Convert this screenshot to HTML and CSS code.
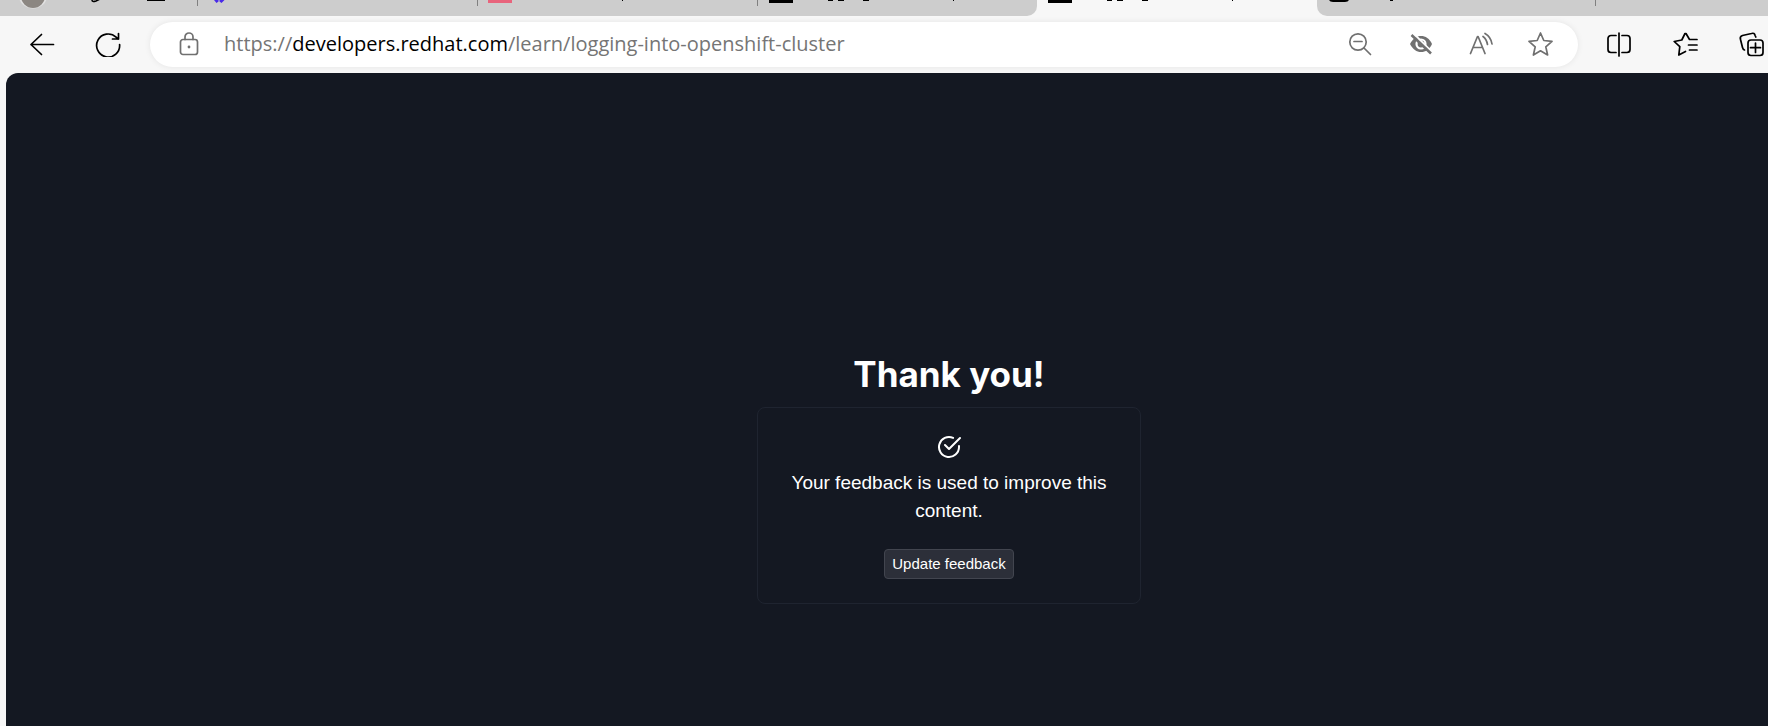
FILE: index.html
```html
<!DOCTYPE html>
<html lang="en">
<head>
<meta charset="utf-8">
<meta name="viewport" content="width=device-width, initial-scale=1">
<title>Thank you!</title>
<link rel="stylesheet" href="styles.css">
</head>
<body>
<header class="browser">
  <div class="tabs">
    <div class="tab-tools">
      <svg width="198" height="16" viewBox="0 0 198 16"><ellipse cx="33" cy="-4" rx="14" ry="12.5" fill="#e2e2e2"/><ellipse cx="33" cy="-4" rx="12" ry="12" fill="#8c8782"/><path d="M92 0c0 2 2 1.600 4 1l4-2" fill="none" stroke="#000" stroke-width="1.600"/><path d="M147 0h18" stroke="#000" stroke-width="2"/></svg>
    </div>
    <div class="tab divided"><svg width="200" height="16" viewBox="0 0 200 16"><path d="M17 0l2.500 3 2-1.500V0zM22.500 0v1.500l2 1.500 3-3z" fill="#4a2be8"/></svg></div>
    <div class="tab divided"><svg width="200" height="16" viewBox="0 0 200 16"><path d="M11 0h24v3H11z" fill="#e8647c"/><path d="M145 0h1v1h-1z"/></svg></div>
    <div class="tab divided before-active"><svg width="240" height="16" viewBox="0 0 240 16"><path d="M12 0h24v3H12zM71 0h5v1h-5zM81 0h6v1h-6zM106 0h6v1h-6zM196 0h1v1h-1z"/></svg></div>
    <div class="tab active"><svg width="240" height="16" viewBox="0 0 240 16"><path d="M11 0h24v3H11zM70 0h5v1h-5zM80 0h6v1h-6zM105 0h6v1h-6zM195 0h1v1h-1z"/></svg></div>
    <div class="tab after-active"><svg width="200" height="16" viewBox="0 0 200 16"><path d="M12 0h20q-1 2-4 2h-12q-3 0-4-2zM73 0h3v1h-3z"/></svg></div>
    <div class="tab divided last"></div>
  </div>
  <div class="toolbar">
    <div class="nav">
      <button class="icon-button" aria-label="Back"><svg width="26" height="26" viewBox="0 0 26 26" class="line"><path d="M24.500 13.500H2M12.500 3.500L2 13.500l10.500 10"/></svg></button>
      <button class="icon-button" aria-label="Refresh"><svg width="26" height="26" viewBox="0 0 26 26" class="line"><path d="M24.600 13.500a11.500 11.500 0 1 1-3.500-7.300l2 2M23.500 2.500v5.500h-6"/></svg></button>
    </div>
    <div class="address">
      <button class="icon-button small" aria-label="Site information"><svg width="22" height="26" viewBox="0 0 22 26" class="line"><rect x="2.500" y="8.500" width="17" height="15" rx="2.500"/><path d="M7 8.500V6a4 4 0 0 1 8 0v2.500"/><circle cx="11" cy="16" r="1.400" fill="currentColor" stroke="none"/></svg></button>
      <div class="url" role="textbox" aria-label="Address" tabindex="0">https://<span class="host">developers.redhat.com</span>/learn/logging-into-openshift-cluster</div>
      <div class="address-actions">
        <button class="icon-button small" aria-label="Zoom out"><svg width="26" height="26" viewBox="0 0 26 26" class="line"><circle cx="10" cy="11" r="8.200"/><path d="M16 17l6.500 6.500M6 10.500h8"/></svg></button>
        <button class="icon-button small" aria-label="Tracking prevention"><svg width="26" height="26" viewBox="0 0 26 26"><path d="M2 13C5 7.500 8.500 5 13 5s8.500 2.500 11 8c-2.500 5.500-6.500 8-11 8S5 18.500 2 13z" fill="currentColor"/><circle cx="13" cy="13" r="4.500" fill="none" stroke="#fff" stroke-width="2.200"/><path d="M5.500 2.500l19 19" stroke="#fff" stroke-width="2"/><path d="M3.500 4L23 22.500" stroke="currentColor" stroke-width="2.600"/></svg></button>
        <button class="icon-button small" aria-label="Read aloud"><svg width="26" height="26" viewBox="0 0 26 26" class="line"><path d="M2.500 22.500L9.500 5.500h.6L17 22.500M5 16.500h9.500M15 5.500q3.500 2.500 4.500 8M17 2.500q6 3.500 7 10.500"/></svg></button>
        <button class="icon-button small" aria-label="Add to favorites"><svg width="26" height="26" viewBox="0 0 26 26" class="line"><path d="M12.500 2l3.300 7.500 8.200.8-6.200 5.500 1.800 8.200-7.100-4.200L5.400 24l1.800-8.200L1 10.300l8.200-.8z"/></svg></button>
      </div>
    </div>
    <div class="browser-actions">
      <button class="icon-button" aria-label="Split screen"><svg width="26" height="26" viewBox="0 0 26 26" class="line"><path d="M10 4.500H5a3 3 0 0 0-3 3v11a3 3 0 0 0 3 3h5M16 4.500h5a3 3 0 0 1 3 3v11a3 3 0 0 1-3 3h-5M13 2v23"/></svg></button>
      <button class="icon-button" aria-label="Favorites"><svg width="26" height="26" viewBox="0 0 26 26" class="line"><path d="M25 8.500h-7.500L14 2.500h-1L9.800 9l-7.600 1.500 5.600 5.200-1 8.300 6.700-3.500M16.500 14H25M17.500 19H25"/></svg></button>
      <button class="icon-button" aria-label="Collections"><svg width="26" height="26" viewBox="0 0 26 26" class="line"><rect x="10" y="9" width="15" height="15.500" rx="3"/><path d="M17.500 12v9.500M12.500 16.700h10M6.500 19q-1.500-.5-2-2.500L2.500 8.500q-1-3 2-4l9-2q3-1 3.600 2l.7 1.500"/></svg></button>
    </div>
  </div>
</header>
<main class="page">
  <section class="thanks">
    <h1 class="title">Thank you!</h1>
    <div class="card">
      <svg class="check" width="24" height="24" viewBox="0 0 24 24" fill="none" stroke="currentColor" stroke-width="2" stroke-linecap="round" stroke-linejoin="round"><path d="M22 11.080V12a10 10 0 1 1-5.930-9.140"/><path d="M23 3L12 14.010l-4-4"/></svg>
      <p class="message">Your feedback is used to improve this content.</p>
      <button class="update">Update feedback</button>
    </div>
  </section>
</main>
</body>
</html>
```
FILE: styles.css
```css
* { box-sizing: border-box; }
body {
  margin: 0;
  min-height: 100vh;
  display: flex;
  flex-direction: column;
  background: #f7f7f7;
  overflow: hidden;
}
svg { display: block; flex: none; }
button { font: inherit; cursor: pointer; }
.tabs { display: flex; height: 16px; background: #f7f7f7; overflow: hidden; }
.tab-tools { flex: none; width: 197px; background: #cdcdcd; }
.tab { flex: none; width: 280px; background: #cdcdcd; overflow: hidden; }
.divided {
  background: linear-gradient(#808080, #808080) 0 0 / 1px 6px no-repeat #cdcdcd;
}
.before-active { border-bottom-right-radius: 10px; }
.active { background: #f7f7f7; }
.after-active { width: 278px; border-bottom-left-radius: 10px; }
.last { flex: 1; }
.toolbar {
  display: flex;
  align-items: center;
  height: 57px;
  background: #f7f7f7;
  padding-bottom: 1px;
}
.nav { display: flex; gap: 40px; padding: 0 29px; }
.icon-button {
  display: flex;
  padding: 0;
  border: 0;
  background: none;
  color: #000;
}
.small { color: #707070; }
.line { fill: none; stroke: currentColor; stroke-width: 1.7; stroke-linecap: round; stroke-linejoin: round; }
.address {
  flex: 1;
  display: flex;
  align-items: center;
  gap: 24px;
  height: 45px;
  padding: 0 24px 0 28px;
  border-radius: 24px;
  background: #fff;
  box-shadow: 0 0 6px rgba(0, 0, 0, 0.08);
}
.url {
  flex: 1;
  font: 20px/28px "Open Sans", "Noto Sans", sans-serif;
  color: #757575;
  white-space: nowrap;
}
.host { color: #000; }
.address-actions { display: flex; gap: 34px; }
.browser-actions { display: flex; gap: 40px; padding: 0 4px 0 28px; }
.page {
  flex: 1;
  margin-left: 6px;
  padding: 277px 0 24px 124px;
  border-top-left-radius: 12px;
  background: #141822;
  color: #fff;
  font-family: "Liberation Sans", sans-serif;
}
.thanks { width: 384px; margin: 0 auto; text-align: center; }
.title { margin: 0 0 9px; font: 700 35px/48px Inter, "Liberation Sans", sans-serif; }
.card {
  display: flex;
  flex-direction: column;
  align-items: center;
  padding: 27px 32px 24px;
  border: 1px solid #1f2430;
  border-radius: 8px;
}
.message { margin: 10px 0 24px; font-size: 19px; line-height: 28px; }
.update {
  height: 30px;
  padding: 0 7px;
  border: 1px solid #42454f;
  border-radius: 4px;
  background: #2c2f39;
  color: #fff;
  font-size: 15px;
  line-height: 20px;
}
```
